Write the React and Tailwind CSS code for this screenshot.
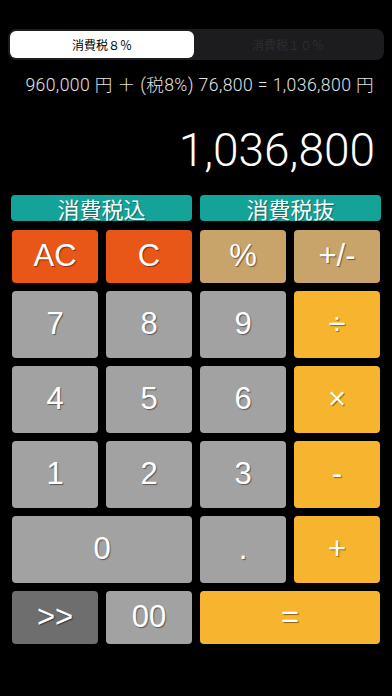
import React from 'react';

const keys = [
  { label: '7', color: 'bg-[#a2a2a2]' },
  { label: '8', color: 'bg-[#a2a2a2]' },
  { label: '9', color: 'bg-[#a2a2a2]' },
  { label: '÷', color: 'bg-[#f7b52f]' },
  { label: '4', color: 'bg-[#a2a2a2]' },
  { label: '5', color: 'bg-[#a2a2a2]' },
  { label: '6', color: 'bg-[#a2a2a2]' },
  { label: '×', color: 'bg-[#f7b52f]' },
  { label: '1', color: 'bg-[#a2a2a2]' },
  { label: '2', color: 'bg-[#a2a2a2]' },
  { label: '3', color: 'bg-[#a2a2a2]' },
  { label: '-', color: 'bg-[#f7b52f]' },
];

const Key = ({ label, color, className = '' }) => (
  <button
    className={`${color} ${className} rounded-[4px] flex items-center justify-center text-white text-[31px] font-['Liberation_Sans',sans-serif] [text-shadow:1px_1px_1px_rgba(0,0,0,0.45)]`}
  >
    {label}
  </button>
);

const TaxTab = ({ label }) => (
  <div className="flex-1 h-[26px] rounded-[4px] bg-[#13a399] flex items-center justify-center text-white text-[22px] leading-none [text-shadow:1px_1px_1px_rgba(0,0,0,0.35)]">
    {label}
  </div>
);

export default function App() {
  return (
    <div className="w-[392px] h-[696px] bg-black overflow-hidden font-['Noto_Sans_CJK_JP',sans-serif]">
      <div className="pt-[29px] px-[8px]">
        <div className="flex h-[31px] rounded-[8px] bg-[#1c1c1e] p-[2px]">
          <div className="w-[184px] bg-white rounded-[6px] flex items-center justify-center text-[12px] text-black">
            消費税８％
          </div>
          <div className="flex-1 flex items-center justify-center text-[12px] text-[#2c2c2e]">
            消費税１０％
          </div>
        </div>
      </div>

      <div className="mt-[13px] pr-[18px] text-right text-[17.6px] tracking-[0.4px] text-[#e2e2e2] leading-[24px] font-light font-['Roboto','Noto_Sans_CJK_JP',sans-serif]">
        960,000 円 ＋ (税8%) 76,800 = 1,036,800 円
      </div>

      <div className="mt-[27px] pr-[17px] text-right text-white text-[46px] leading-[52px] font-light font-['Roboto',sans-serif]">
        1,036,800
      </div>

      <div className="mt-[19px] px-[11px] flex gap-[8px]">
        <TaxTab label="消費税込" />
        <TaxTab label="消費税抜" />
      </div>

      <div className="mt-[9px] px-[12px] grid grid-cols-4 gap-[8px] grid-rows-[53px_67px_67px_67px_67px_53px]">
        <Key label="AC" color="bg-[#e85718]" />
        <Key label="C" color="bg-[#e85718]" />
        <Key label="%" color="bg-[#c8a36a]" />
        <Key label="+/-" color="bg-[#c8a36a]" />
        {keys.map((k) => (
          <Key key={k.label} label={k.label} color={k.color} />
        ))}
        <Key label="0" color="bg-[#a2a2a2]" className="col-span-2" />
        <Key label="." color="bg-[#a2a2a2]" />
        <Key label="+" color="bg-[#f7b52f]" />
        <Key label=">>" color="bg-[#6e6e6e]" />
        <Key label="00" color="bg-[#a2a2a2]" />
        <Key label="=" color="bg-[#f7b52f]" className="col-span-2" />
      </div>
    </div>
  );
}
